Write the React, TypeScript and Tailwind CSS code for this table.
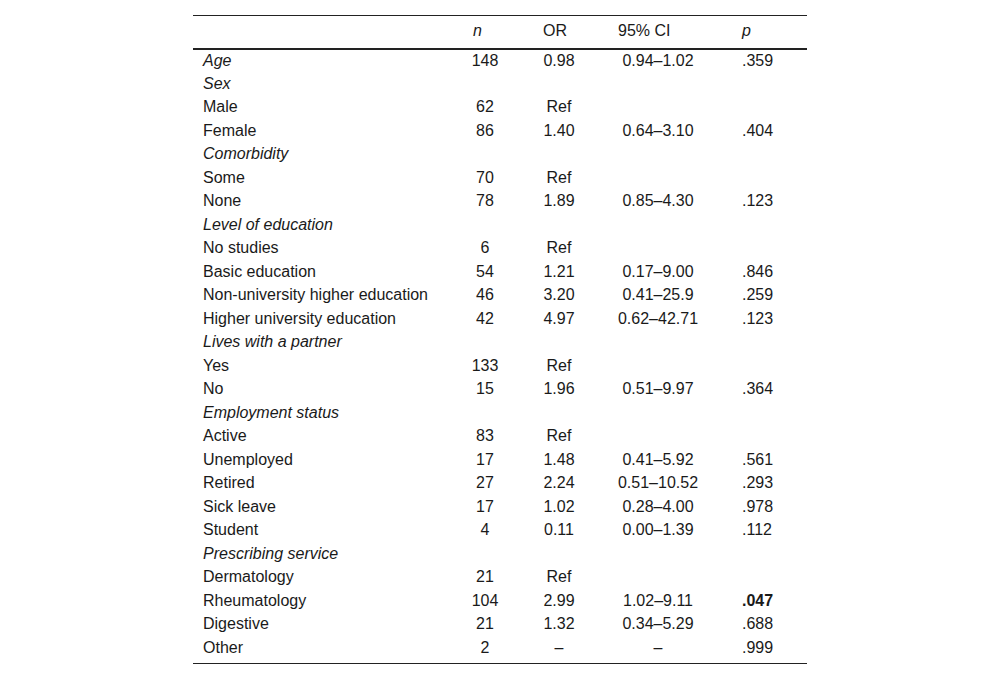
type Row = {
  label: string;
  italic?: boolean;
  n?: string;
  or?: string;
  ci?: string;
  p?: string;
  bold?: boolean;
};

const rows: Row[] = [
  { label: 'Age', italic: true, n: '148', or: '0.98', ci: '0.94–1.02', p: '.359' },
  { label: 'Sex', italic: true },
  { label: 'Male', n: '62', or: 'Ref' },
  { label: 'Female', n: '86', or: '1.40', ci: '0.64–3.10', p: '.404' },
  { label: 'Comorbidity', italic: true },
  { label: 'Some', n: '70', or: 'Ref' },
  { label: 'None', n: '78', or: '1.89', ci: '0.85–4.30', p: '.123' },
  { label: 'Level of education', italic: true },
  { label: 'No studies', n: '6', or: 'Ref' },
  { label: 'Basic education', n: '54', or: '1.21', ci: '0.17–9.00', p: '.846' },
  { label: 'Non-university higher education', n: '46', or: '3.20', ci: '0.41–25.9', p: '.259' },
  { label: 'Higher university education', n: '42', or: '4.97', ci: '0.62–42.71', p: '.123' },
  { label: 'Lives with a partner', italic: true },
  { label: 'Yes', n: '133', or: 'Ref' },
  { label: 'No', n: '15', or: '1.96', ci: '0.51–9.97', p: '.364' },
  { label: 'Employment status', italic: true },
  { label: 'Active', n: '83', or: 'Ref' },
  { label: 'Unemployed', n: '17', or: '1.48', ci: '0.41–5.92', p: '.561' },
  { label: 'Retired', n: '27', or: '2.24', ci: '0.51–10.52', p: '.293' },
  { label: 'Sick leave', n: '17', or: '1.02', ci: '0.28–4.00', p: '.978' },
  { label: 'Student', n: '4', or: '0.11', ci: '0.00–1.39', p: '.112' },
  { label: 'Prescribing service', italic: true },
  { label: 'Dermatology', n: '21', or: 'Ref' },
  { label: 'Rheumatology', n: '104', or: '2.99', ci: '1.02–9.11', p: '.047', bold: true },
  { label: 'Digestive', n: '21', or: '1.32', ci: '0.34–5.29', p: '.688' },
  { label: 'Other', n: '2', or: '–', ci: '–', p: '.999' },
];

export default function App() {
  return (
    <div className="w-[1000px] h-[680px] bg-white pt-[15px] flex justify-center text-[#1a1a1a] text-[16px] leading-none" style={{ fontFamily: '"Liberation Sans", Arial, sans-serif' }}>
      <table className="w-[614px] table-fixed border-collapse self-start">
        <colgroup>
          <col className="w-[270px]" />
          <col className="w-[70px]" />
          <col className="w-[75px]" />
          <col className="w-[124px]" />
          <col className="w-[75px]" />
        </colgroup>
        <thead>
          <tr className="border-t border-[#222] border-b-2 h-[33px]">
            <th></th>
            <th className="pl-[10px] pb-[1px] text-left font-normal italic">n</th>
            <th className="pl-[10px] pb-[1px] text-left font-normal">OR</th>
            <th className="pl-[10px] pb-[1px] text-left font-normal">95% CI</th>
            <th className="pl-[10px] pb-[1px] text-left font-normal italic">p</th>
          </tr>
        </thead>
        <tbody className="border-b border-[#222]">
          {rows.map((r, i) => (
            <tr key={i} className="h-[23.5px]">
              <td className={`pl-[10px] whitespace-nowrap ${r.italic ? 'italic' : ''}`}>{r.label}</td>
              <td className="text-center pr-[26px]">{r.n}</td>
              <td className="text-center pr-[23px]">{r.or}</td>
              <td className="text-center pr-[24px]">{r.ci}</td>
              <td className={`pl-[10px] ${r.bold ? 'font-bold' : ''}`}>{r.p}</td>
            </tr>
          ))}
          <tr className="h-[4px]"><td colSpan={5}></td></tr>
        </tbody>
      </table>
    </div>
  );
}
